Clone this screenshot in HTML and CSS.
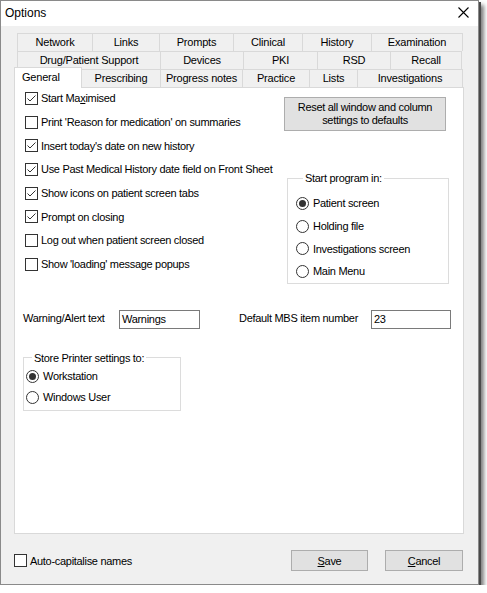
FILE: index.html
```html
<!DOCTYPE html>
<html>
<head>
<meta charset="utf-8">
<link rel="stylesheet" href="styles.css">
</head>
<body>
<div class="window">
  <div class="titlebar">
    <span class="title">Options</span>
    <svg class="close" width="11" height="11" viewBox="0 0 11 11"><path d="M0.5 0.5 L10.5 10.5 M10.5 0.5 L0.5 10.5" stroke="#000" stroke-width="1.1" fill="none"/></svg>
  </div>
  <div class="client">
    <div class="tabs">
      <div class="tabrow r1">
        <div class="tab t75">Network</div>
        <div class="tab t67">Links</div>
        <div class="tab t74">Prompts</div>
        <div class="tab t69">Clinical</div>
        <div class="tab t69">History</div>
        <div class="tab t90 last">Examination</div>
      </div>
      <div class="tabrow r2">
        <div class="tab t143">Drug/Patient Support</div>
        <div class="tab t83">Devices</div>
        <div class="tab t74">PKI</div>
        <div class="tab t73">RSD</div>
        <div class="tab t71 last">Recall</div>
      </div>
      <div class="tabrow r3">
        <div class="tab sel">General</div>
        <div class="tab t78 nol">Prescribing</div>
        <div class="tab t82">Progress notes</div>
        <div class="tab t67">Practice</div>
        <div class="tab t48">Lists</div>
        <div class="tab t105 last">Investigations</div>
      </div>
    </div>
    <div class="panel">
      <div class="top">
        <div class="checks">
          <label class="row"><span class="cb on"><svg width="11" height="11" viewBox="0 0 11 11"><path d="M1.5 5.5 L4 8 L9.5 2.5" stroke="#333" stroke-width="1" fill="none"/></svg></span>Start Ma<u>x</u>imised</label>
          <label class="row"><span class="cb"></span>Print 'Reason for medication' on summaries</label>
          <label class="row"><span class="cb on"><svg width="11" height="11" viewBox="0 0 11 11"><path d="M1.5 5.5 L4 8 L9.5 2.5" stroke="#333" stroke-width="1" fill="none"/></svg></span>Insert today's date on new history</label>
          <label class="row"><span class="cb on"><svg width="11" height="11" viewBox="0 0 11 11"><path d="M1.5 5.5 L4 8 L9.5 2.5" stroke="#333" stroke-width="1" fill="none"/></svg></span>Use Past Medical History date field on Front Sheet</label>
          <label class="row"><span class="cb on"><svg width="11" height="11" viewBox="0 0 11 11"><path d="M1.5 5.5 L4 8 L9.5 2.5" stroke="#333" stroke-width="1" fill="none"/></svg></span>Show icons on patient screen tabs</label>
          <label class="row"><span class="cb on"><svg width="11" height="11" viewBox="0 0 11 11"><path d="M1.5 5.5 L4 8 L9.5 2.5" stroke="#333" stroke-width="1" fill="none"/></svg></span>Prompt on closing</label>
          <label class="row"><span class="cb"></span>Log out when patient screen closed</label>
          <label class="row"><span class="cb"></span>Show 'loading' message popups</label>
        </div>
        <div class="right">
          <div class="btn reset">Reset all window and column<br>settings to defaults</div>
          <fieldset class="group start">
            <legend>Start program in:</legend>
            <div class="rrow"><span class="rb on"></span>Patient screen</div>
            <div class="rrow"><span class="rb"></span>Holding file</div>
            <div class="rrow"><span class="rb"></span>Investigations screen</div>
            <div class="rrow"><span class="rb"></span>Main Menu</div>
          </fieldset>
        </div>
      </div>
      <div class="fields">
        <span class="flabel l1">Warning/Alert text</span>
        <div class="input i1">Warnings</div>
        <span class="flabel l2">Default MBS item number</span>
        <div class="input i2">23</div>
      </div>
      <fieldset class="group printer">
        <legend>Store Printer settings to:</legend>
        <div class="prow"><span class="rb on"></span>Workstation</div>
        <div class="prow"><span class="rb"></span>Windows User</div>
      </fieldset>
    </div>
    <div class="footer">
      <label class="auto"><span class="cb"></span>Auto-capitalise names</label>
      <div class="btn save"><u>S</u>ave</div>
      <div class="btn cancel"><u>C</u>ancel</div>
    </div>
  </div>
</div>
</body>
</html>
```

FILE: styles.css
```css
html, body {
  margin: 0;
  padding: 0;
  background: #ffffff;
}
body {
  font-family: "Liberation Sans", Arial, sans-serif;
  font-size: 11px;
  letter-spacing: -0.3px;
  color: #000;
}
.window {
  width: 477px;
  height: 583px;
  border: 1px solid #8a8a8a;
  background: #f0f0f0;
  box-shadow: 2px 2px 0 #4a4a4a, 5px 5px 4px rgba(0,0,0,0.5);
  display: flex;
  flex-direction: column;
}
.titlebar {
  height: 25px;
  background: #ffffff;
  display: flex;
  align-items: center;
  justify-content: space-between;
  padding: 0 9px 0 4px;
}
.title {
  font-size: 12px;
  letter-spacing: 0;
  margin-top: -1px;
}
.close {
  display: block;
  margin-top: -2px;
}
.client {
  flex: 1;
  padding-top: 7px;
  display: flex;
  flex-direction: column;
}
.tabs {
  display: flex;
  flex-direction: column;
}
.tabrow {
  display: flex;
  height: 18px;
}
.r1, .r2 {
  margin-left: 16px;
}
.r3 {
  margin-left: 13px;
  align-items: flex-end;
  position: relative;
  z-index: 2;
}
.tab {
  box-sizing: border-box;
  height: 18px;
  border-top: 1px solid #d9d9d9;
  border-left: 1px solid #d9d9d9;
  display: flex;
  align-items: center;
  justify-content: center;
  white-space: nowrap;
  padding-bottom: 1px;
  letter-spacing: -0.2px;
}
.tab.last {
  border-right: 1px solid #d9d9d9;
}
.tab.nol {
  border-left: none;
}
.tab.sel {
  width: 68px;
  height: 21px;
  margin-bottom: -1px;
  margin-top: -3px;
  background: #ffffff;
  border: 1px solid #d9d9d9;
  border-bottom: none;
  justify-content: flex-start;
  padding-left: 7px;
  padding-bottom: 3px;
}
.t48 { width: 48px; }
.t67 { width: 67px; }
.t69 { width: 69px; }
.t71 { width: 72px; }
.t73 { width: 73px; }
.t74 { width: 74px; }
.t75 { width: 75px; }
.t78 { width: 78px; }
.t82 { width: 82px; }
.t83 { width: 83px; }
.t90 { width: 92px; }
.t105 { width: 106px; }
.t143 { width: 143px; }

.panel {
  box-sizing: border-box;
  margin-left: 13px;
  width: 450px;
  height: 447px;
  background: #ffffff;
  border: 1px solid #d9d9d9;
  position: relative;
  z-index: 1;
}
.top {
  display: grid;
  grid-template-columns: 269px 1fr;
}
.checks {
  padding-left: 10px;
  margin-top: -1.5px;
  display: flex;
  flex-direction: column;
}
.row {
  height: 23.7px;
  display: flex;
  align-items: center;
  white-space: nowrap;
}
.cb {
  box-sizing: border-box;
  width: 13px;
  height: 13px;
  border: 1px solid #333333;
  background: #ffffff;
  margin-right: 3px;
  flex: none;
  display: flex;
  align-items: center;
  justify-content: center;
}
.cb svg {
  display: block;
}
.right {
  padding-top: 9px;
  display: flex;
  flex-direction: column;
}
.btn {
  box-sizing: border-box;
  background: #e1e1e1;
  border: 1px solid #adadad;
  display: flex;
  align-items: center;
  justify-content: center;
  text-align: center;
}
.reset {
  width: 162px;
  height: 34px;
  line-height: 13px;
  padding-bottom: 1px;
}
.group {
  margin: 0;
  padding: 0;
  border: 1px solid #dcdcdc;
  min-width: 0;
}
.group legend {
  padding: 0 2px;
  line-height: 14px;
}
.start {
  box-sizing: border-box;
  width: 162px;
  margin-top: 40px;
  margin-left: 3px;
  padding: 7px 0 0 8px;
}
.start legend {
  margin-left: 7px;
}
.rrow {
  height: 22.7px;
  display: flex;
  align-items: center;
  white-space: nowrap;
}
.rb {
  box-sizing: border-box;
  width: 13px;
  height: 13px;
  border: 1px solid #333333;
  border-radius: 50%;
  background: #ffffff;
  margin-right: 4px;
  flex: none;
  display: flex;
  align-items: center;
  justify-content: center;
}
.rb.on::after {
  content: "";
  width: 7px;
  height: 7px;
  border-radius: 50%;
  background: #333333;
}
.fields {
  display: flex;
  align-items: center;
  margin-top: 26px;
  padding-left: 8px;
  height: 19px;
}
.flabel {
  white-space: nowrap;
  margin-top: -2px;
}
.l1 { width: 96px; }
.l2 { width: 132px; margin-left: 39px; }
.input {
  box-sizing: border-box;
  height: 19px;
  border: 1px solid #7a7a7a;
  background: #ffffff;
  padding-left: 2px;
  display: flex;
  align-items: center;
}
.i1 { width: 81px; }
.i2 { width: 80px; }
.printer {
  box-sizing: border-box;
  width: 158px;
  margin-top: 22px;
  margin-left: 8px;
  padding: 1px 0 2px 2px;
}
.printer legend {
  margin-left: 6px;
}
.prow {
  height: 21px;
  display: flex;
  align-items: center;
  white-space: nowrap;
}
.footer {
  margin-top: 16px;
  height: 21px;
  display: flex;
  align-items: center;
  padding-left: 13px;
}
.auto {
  display: flex;
  align-items: center;
  white-space: nowrap;
}
.auto .cb {
  margin-right: 3px;
}
.save {
  width: 77px;
  height: 21px;
  margin-left: auto;
}
.cancel {
  width: 78px;
  height: 21px;
  margin-left: 17px;
  margin-right: 15px;
}
```
